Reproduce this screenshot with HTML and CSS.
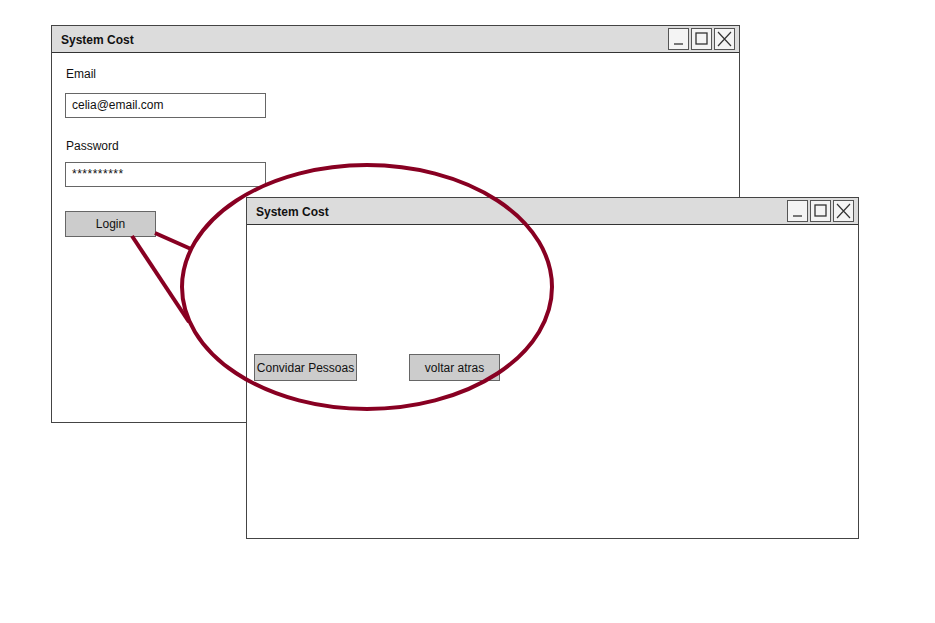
FILE: index.html
```html
<!DOCTYPE html>
<html>
<head>
<meta charset="utf-8">
<link rel="stylesheet" href="styles.css">
</head>
<body>
<div class="desktop">
  <div class="window win-login">
    <div class="titlebar">
      <span class="title">System Cost</span>
      <div class="controls">
        <span class="ctl"><svg width="19" height="20" viewBox="0 0 19 20"><line x1="5" y1="15" x2="14" y2="15" stroke="#333" stroke-width="1.3"/></svg></span>
        <span class="ctl"><svg width="19" height="20" viewBox="0 0 19 20"><rect x="4" y="4" width="11" height="11" fill="none" stroke="#333" stroke-width="1.3"/></svg></span>
        <span class="ctl"><svg width="19" height="20" viewBox="0 0 19 20"><path d="M3 3 L16 17 M16 3 L3 17" stroke="#333" stroke-width="1.2" fill="none"/></svg></span>
      </div>
    </div>
    <div class="body login-body">
      <label class="lbl lbl-email">Email</label>
      <div class="input">celia@email.com</div>
      <label class="lbl lbl-pass">Password</label>
      <div class="input pass">**********</div>
      <div class="btn btn-login">Login</div>
    </div>
  </div>

  <div class="window win-main">
    <div class="titlebar">
      <span class="title">System Cost</span>
      <div class="controls">
        <span class="ctl"><svg width="19" height="20" viewBox="0 0 19 20"><line x1="5" y1="15" x2="14" y2="15" stroke="#333" stroke-width="1.3"/></svg></span>
        <span class="ctl"><svg width="19" height="20" viewBox="0 0 19 20"><rect x="4" y="4" width="11" height="11" fill="none" stroke="#333" stroke-width="1.3"/></svg></span>
        <span class="ctl"><svg width="19" height="20" viewBox="0 0 19 20"><path d="M3 3 L16 17 M16 3 L3 17" stroke="#333" stroke-width="1.2" fill="none"/></svg></span>
      </div>
    </div>
    <div class="body main-body">
      <div class="btn-row">
        <div class="btn btn-invite">Convidar Pessoas</div>
        <div class="btn btn-back">voltar atras</div>
      </div>
    </div>
  </div>

  <svg class="callout" width="935" height="623" viewBox="0 0 935 623">
    <ellipse cx="367" cy="287" rx="185" ry="122" fill="none" stroke="#880022" stroke-width="4"/>
    <line x1="155" y1="233" x2="191" y2="249" stroke="#880022" stroke-width="4"/>
    <line x1="132" y1="236" x2="189" y2="322" stroke="#880022" stroke-width="4"/>
  </svg>
</div>
</body>
</html>
```

FILE: styles.css
```css
html, body {
  margin: 0;
  padding: 0;
  background: #fff;
}
.desktop {
  position: relative;
  width: 935px;
  height: 623px;
  overflow: hidden;
  font-family: "Comic Sans MS", "Liberation Sans", Arial, sans-serif;
  font-size: 12px;
  color: #111;
}
.window {
  position: absolute;
  box-sizing: border-box;
  border: 1px solid #444;
  background: #fff;
  display: flex;
  flex-direction: column;
}
.win-login {
  left: 51px;
  top: 25px;
  width: 689px;
  height: 398px;
}
.win-main {
  left: 246px;
  top: 197px;
  width: 613px;
  height: 342px;
}
.titlebar {
  height: 27px;
  box-sizing: border-box;
  background: #dcdcdc;
  border-bottom: 1.5px solid #333;
  display: flex;
  align-items: center;
  justify-content: space-between;
  padding: 0 4px 0 9px;
}
.title {
  font-weight: bold;
  font-size: 12px;
  color: #111;
  padding-top: 1px;
}
.controls {
  display: flex;
  gap: 2px;
  align-items: center;
}
.ctl {
  box-sizing: border-box;
  width: 21px;
  height: 22px;
  border: 1.5px solid #555;
  background: #f4f4f4;
  display: flex;
  align-items: center;
  justify-content: center;
}
.ctl svg { display: block; }
.body {
  flex: 1;
  display: flex;
  flex-direction: column;
  align-items: flex-start;
}
.login-body {
  padding: 13px 0 0 13px;
}
.lbl {
  display: block;
  line-height: 16px;
  padding-left: 1px;
}
.lbl-email { margin-bottom: 11px; }
.lbl-pass { margin-top: 20px; margin-bottom: 8px; }
.input {
  box-sizing: border-box;
  width: 201px;
  height: 25px;
  border: 1.5px solid #666;
  background: #fff;
  padding: 0 6px;
  line-height: 22px;
  font-size: 12px;
}
.input.pass {
  letter-spacing: 0.5px;
}
.btn {
  box-sizing: border-box;
  height: 27px;
  border: 1.5px solid #666;
  background: #cccccc;
  display: flex;
  align-items: center;
  justify-content: center;
  font-size: 12px;
}
.btn-login {
  width: 91px;
  height: 26px;
  margin-top: 24px;
}
.main-body {
  padding: 129px 0 0 7px;
}
.btn-row {
  display: flex;
  gap: 52px;
}
.btn-invite { width: 103px; }
.btn-back { width: 91px; }
.callout {
  position: absolute;
  left: 0;
  top: 0;
  pointer-events: none;
}
```
